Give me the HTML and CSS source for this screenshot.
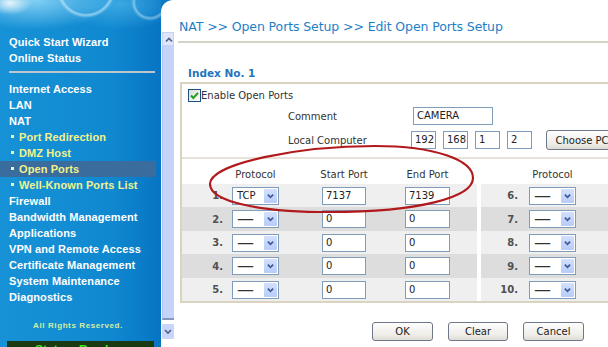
FILE: index.html
```html
<!DOCTYPE html>
<html lang="en">
<head>
<meta charset="utf-8">
<title>NAT - Open Ports Setup</title>
<link rel="stylesheet" href="styles.css">
</head>
<body>
<div class="page">
  <aside class="sidebar">
    <nav class="menu">
      <a class="item">Quick Start Wizard</a>
      <a class="item">Online Status</a>
      <hr class="sep">
      <a class="item">Internet Access</a>
      <a class="item">LAN</a>
      <a class="item">NAT</a>
      <a class="item sub">Port Redirection</a>
      <a class="item sub">DMZ Host</a>
      <a class="item sub active">Open Ports</a>
      <a class="item sub">Well-Known Ports List</a>
      <a class="item">Firewall</a>
      <a class="item">Bandwidth Management</a>
      <a class="item">Applications</a>
      <a class="item">VPN and Remote Access</a>
      <a class="item">Certificate Management</a>
      <a class="item">System Maintenance</a>
      <a class="item">Diagnostics</a>
    </nav>
    <div class="rights">All Rights Reserved.</div>
    <div class="status">Status: Ready</div>
  </aside>

  <div class="frame">
    <div class="scrollcol">
      <div class="scrollbar">
        <div class="sb-btn sb-up"><svg viewBox="0 0 12 14" width="12" height="14"><path d="M3 8.5 6 5.5 9 8.5"/></svg></div>
        <div class="sb-thumb"></div>
        <div class="sb-gap"></div>
        <div class="sb-btn sb-down"><svg viewBox="0 0 12 15" width="12" height="15"><path d="M3 6 6 9 9 6"/></svg></div>
      </div>
    </div>

    <main class="content">
      <h1 class="title">NAT &gt;&gt; Open Ports Setup &gt;&gt; Edit Open Ports Setup</h1>
      <h2 class="index">Index No. 1</h2>
      <section class="box">
        <label class="enable"><span class="check"><svg viewBox="0 0 13 13" width="13" height="13"><path d="M3 6.5 5.3 9 10 3.8"/></svg></span>Enable Open Ports</label>
        <div class="field">
          <span class="lbl">Comment</span>
          <span class="inp comment">CAMERA</span>
        </div>
        <div class="field local">
          <span class="lbl">Local Computer</span>
          <span class="ips">
            <span class="inp ip">192</span>
            <span class="inp ip">168</span>
            <span class="inp ip">1</span>
            <span class="inp ip">2</span>
          </span>
          <button class="btn choose">Choose PC</button>
        </div>

        <div class="ports">
          <div class="half left">
            <div class="row hrow">
              <span></span>
              <span class="hcell w-sel">Protocol</span>
              <span class="hcell w-start">Start Port</span>
              <span class="hcell w-end">End Port</span>
            </div>
            <div class="row">
              <span class="num">1.</span>
              <span class="sel"><span class="sel-val">TCP</span><span class="sel-btn"><svg viewBox="0 0 13 16" width="13" height="16"><path d="M3.5 6.5 6.5 9.5 9.5 6.5"/></svg></span></span>
              <span class="inp w-start">7137</span>
              <span class="inp w-end">7139</span>
            </div>
            <div class="row">
              <span class="num">2.</span>
              <span class="sel"><span class="sel-val dash">—</span><span class="sel-btn"><svg viewBox="0 0 13 16" width="13" height="16"><path d="M3.5 6.5 6.5 9.5 9.5 6.5"/></svg></span></span>
              <span class="inp w-start">0</span>
              <span class="inp w-end">0</span>
            </div>
            <div class="row">
              <span class="num">3.</span>
              <span class="sel"><span class="sel-val dash">—</span><span class="sel-btn"><svg viewBox="0 0 13 16" width="13" height="16"><path d="M3.5 6.5 6.5 9.5 9.5 6.5"/></svg></span></span>
              <span class="inp w-start">0</span>
              <span class="inp w-end">0</span>
            </div>
            <div class="row">
              <span class="num">4.</span>
              <span class="sel"><span class="sel-val dash">—</span><span class="sel-btn"><svg viewBox="0 0 13 16" width="13" height="16"><path d="M3.5 6.5 6.5 9.5 9.5 6.5"/></svg></span></span>
              <span class="inp w-start">0</span>
              <span class="inp w-end">0</span>
            </div>
            <div class="row">
              <span class="num">5.</span>
              <span class="sel"><span class="sel-val dash">—</span><span class="sel-btn"><svg viewBox="0 0 13 16" width="13" height="16"><path d="M3.5 6.5 6.5 9.5 9.5 6.5"/></svg></span></span>
              <span class="inp w-start">0</span>
              <span class="inp w-end">0</span>
            </div>
          </div>

          <div class="half right">
            <div class="row hrow">
              <span></span>
              <span class="hcell w-sel">Protocol</span>
            </div>
            <div class="row">
              <span class="num">6.</span>
              <span class="sel"><span class="sel-val dash">—</span><span class="sel-btn"><svg viewBox="0 0 13 16" width="13" height="16"><path d="M3.5 6.5 6.5 9.5 9.5 6.5"/></svg></span></span>
            </div>
            <div class="row">
              <span class="num">7.</span>
              <span class="sel"><span class="sel-val dash">—</span><span class="sel-btn"><svg viewBox="0 0 13 16" width="13" height="16"><path d="M3.5 6.5 6.5 9.5 9.5 6.5"/></svg></span></span>
            </div>
            <div class="row">
              <span class="num">8.</span>
              <span class="sel"><span class="sel-val dash">—</span><span class="sel-btn"><svg viewBox="0 0 13 16" width="13" height="16"><path d="M3.5 6.5 6.5 9.5 9.5 6.5"/></svg></span></span>
            </div>
            <div class="row">
              <span class="num">9.</span>
              <span class="sel"><span class="sel-val dash">—</span><span class="sel-btn"><svg viewBox="0 0 13 16" width="13" height="16"><path d="M3.5 6.5 6.5 9.5 9.5 6.5"/></svg></span></span>
            </div>
            <div class="row">
              <span class="num">10.</span>
              <span class="sel"><span class="sel-val dash">—</span><span class="sel-btn"><svg viewBox="0 0 13 16" width="13" height="16"><path d="M3.5 6.5 6.5 9.5 9.5 6.5"/></svg></span></span>
            </div>
          </div>
        </div>
      </section>

      <div class="actions">
        <button class="btn act">OK</button>
        <button class="btn act">Clear</button>
        <button class="btn act">Cancel</button>
      </div>
    </main>
  </div>

  <svg class="mark" viewBox="0 0 290 90" width="290" height="90">
    <path d="M10 49 C10 28 100 11 175 11 C235 11 273 25 273 43 C273 62 220 77 130 77 C60 77 10 67 10 49 Z"/>
  </svg>
</div>
</body>
</html>
```

FILE: styles.css
```css
* { box-sizing: border-box; }

html, body {
  margin: 0;
  padding: 0;
}

body {
  width: 608px;
  height: 347px;
  overflow: hidden;
  background: #0a79c7;
  font-family: "DejaVu Sans", Verdana, sans-serif;
}

.page {
  position: relative;
  display: flex;
  width: 608px;
  height: 347px;
}

/* ---------- sidebar ---------- */
.sidebar {
  width: 161px;
  flex: none;
  display: flex;
  flex-direction: column;
  font-family: "Liberation Sans", Arial, sans-serif;
  background:
    radial-gradient(ellipse 22px 12px at 10px 3px, rgba(255,255,255,.85), rgba(255,255,255,0)),
    radial-gradient(circle at 86px -12px, rgba(255,255,255,0) 25px, rgba(220,245,255,.55) 27px, rgba(255,255,255,0) 30px),
    radial-gradient(circle at 150px 2px, rgba(255,255,255,0) 14px, rgba(220,245,255,.45) 16px, rgba(255,255,255,0) 19px),
    radial-gradient(ellipse 80px 30px at 35px 0, rgba(150,220,250,.85), rgba(150,220,250,0)),
    radial-gradient(ellipse 60px 26px at 120px 4px, rgba(90,190,240,.6), rgba(90,190,240,0)),
    linear-gradient(90deg, #1792d6 0%, #0f88d0 70%, #0774c3 100%);
}

.menu {
  padding-top: 34px;
  display: flex;
  flex-direction: column;
}

.item {
  display: block;
  height: 16px;
  line-height: 16px;
  padding-left: 9px;
  color: #ffffff;
  font-size: 11px;
  font-weight: bold;
  letter-spacing: 0.1px;
  white-space: nowrap;
}

.item.sub {
  padding-left: 11px;
  color: #f2f28c;
}

.item.sub::before {
  content: "";
  display: inline-block;
  width: 3px;
  height: 3px;
  margin-right: 5px;
  vertical-align: 3px;
  background: #f4f4c4;
}

.item.active {
  margin-right: 5px;
  background: #3a6c9d;
}

.sep {
  margin: 5px 6px 8px 9px;
  height: 2px;
  border: 0;
  background: #bcc6cc;
}

.rights {
  margin-top: 16px;
  padding-right: 5px;
  text-align: center;
  font-size: 8px;
  line-height: 10px;
  font-weight: bold;
  letter-spacing: 0.6px;
  color: #d4eca0;
}

.status {
  margin: 10px 7px 0 7px;
  height: 20px;
  padding: 2px 0 0 28px;
  background: #1c3a12;
  color: #3ee81f;
  font-size: 12px;
  font-weight: bold;
  line-height: 14px;
  white-space: nowrap;
}

/* ---------- frame ---------- */
.frame {
  flex: 1;
  min-width: 0;
  display: flex;
  background: #ffffff;
  border-top-left-radius: 12px;
}

.scrollcol {
  width: 15px;
  flex: none;
  padding: 32px 0 0 1px;
}

.scrollbar {
  width: 12px;
  height: 307px;
  display: flex;
  flex-direction: column;
}

.sb-btn svg { display: block; }
.sb-btn path {
  fill: none;
  stroke: #4d6185;
  stroke-width: 1.6;
}

.sb-up {
  height: 14px;
  background: #dfe6fb;
  border: 1px solid #c5d2f4;
}

.sb-thumb {
  flex: 1;
  background: #c6d3f8;
  border-left: 1px solid #b4c4f2;
  border-bottom: 2px solid #8796bc;
}

.sb-gap { height: 4px; }

.sb-down {
  height: 15px;
  background: #c9d6fa;
  border-radius: 1px;
}

/* ---------- content ---------- */
.content {
  flex: 1;
  min-width: 0;
  padding-left: 2px;
  color: #333333;
  font-size: 10px;
}

.title {
  margin: 0;
  padding: 19px 0 6px 1px;
  border-bottom: 2px solid #d5d2c6;
  font-size: 12.5px;
  font-weight: normal;
  line-height: 16px;
  letter-spacing: -0.1px;
  color: #1e7fc9;
  white-space: nowrap;
}

.index {
  margin: 23px 0 0 10px;
  font-size: 10.5px;
  font-weight: bold;
  line-height: 14px;
  color: #2474bd;
}

.box {
  margin: 2px 0 0 2px;
  width: 440px;
  border: 2px solid #d9d3c0;
}

.enable {
  display: flex;
  align-items: center;
  height: 13px;
  margin: 5px 0 0 6px;
  font-size: 10px;
  color: #333333;
}

.check {
  width: 13px;
  height: 13px;
  flex: none;
  border: 1px solid #1c5180;
  background: linear-gradient(135deg, #dcdcd6, #ffffff);
}

.check svg { display: block; margin: -1px; }
.check path {
  fill: none;
  stroke: #21a121;
  stroke-width: 2;
}

.field {
  display: flex;
  align-items: center;
  height: 18px;
  margin-top: 5px;
  padding-left: 106px;
}

.field.local {
  height: 20px;
  margin-top: 5px;
}

.lbl {
  width: 123px;
  flex: none;
  font-size: 10px;
  color: #333333;
}

.inp {
  display: block;
  height: 18px;
  border: 1px solid #7f9db9;
  background: #ffffff;
  padding-left: 3px;
  font-size: 10px;
  line-height: 16px;
  color: #222222;
  white-space: nowrap;
}

.comment {
  width: 80px;
  margin-left: 2px;
}

.ips {
  display: flex;
  gap: 7px;
}

.ip { width: 25px; }

.btn {
  height: 19px;
  padding: 0;
  border: 1px solid #6f7888;
  border-radius: 3px;
  background: linear-gradient(#fdfdfd, #eeede8 70%, #dedcd4);
  font-family: "DejaVu Sans", Verdana, sans-serif;
  font-size: 10px;
  color: #222222;
}

.choose {
  width: 80px;
  height: 20px;
  margin-left: 14px;
}

/* ---------- ports table ---------- */
.ports {
  display: flex;
  gap: 4px;
  margin-top: 7px;
  border-top: 2px solid #e7e3d8;
}

.half {
  display: flex;
  flex-direction: column;
}

.half.left { width: 295px; }
.half.right { flex: 1; }

.row {
  display: grid;
  align-items: center;
}

.left .row { grid-template-columns: 41px 56px 87px 84px; }
.right .row { grid-template-columns: 37px 58px; }

.row:nth-child(even) { height: 23px; background: #efefef; }
.row:nth-child(odd) { height: 24px; background: #dddddd; }

.row.hrow {
  height: 25px;
  align-items: start;
  padding-top: 9px;
  background: #ffffff;
  font-size: 10px;
  line-height: 14px;
  color: #333333;
}

.hcell {
  justify-self: end;
  display: flex;
  justify-content: center;
  white-space: nowrap;
}

.w-sel { width: 47px; }
.w-start { width: 44px; justify-self: end; }
.w-end { width: 45px; justify-self: end; }

.num {
  text-align: right;
  font-size: 10px;
  font-weight: bold;
  color: #505050;
}

.sel {
  justify-self: end;
  display: flex;
  width: 47px;
  height: 18px;
  border: 1px solid #7f9db9;
  background: #ffffff;
}

.sel-val {
  flex: 1;
  padding-left: 4px;
  font-size: 10px;
  line-height: 16px;
  color: #222222;
  white-space: nowrap;
}

.sel-val.dash {
  font-size: 17px;
  line-height: 14px;
  color: #333333;
}

.sel-btn {
  width: 13px;
  flex: none;
  margin: 1px 1px 1px 0;
  border-radius: 1px;
  background: linear-gradient(#d3e0fd, #b8ccf8);
}

.sel-btn svg { display: block; height: 14px; }
.sel-btn path {
  fill: none;
  stroke: #3d5a9a;
  stroke-width: 2;
}

/* ---------- buttons ---------- */
.actions {
  display: flex;
  gap: 15px;
  margin: 19px 0 0 194px;
}

.act { width: 61px; }
.act:nth-child(2) { width: 60px; }

/* ---------- annotation ---------- */
.mark {
  position: absolute;
  left: 200px;
  top: 135px;
  overflow: visible;
}

.mark path {
  fill: none;
  stroke: #b2191c;
  stroke-width: 2.2;
}
```
